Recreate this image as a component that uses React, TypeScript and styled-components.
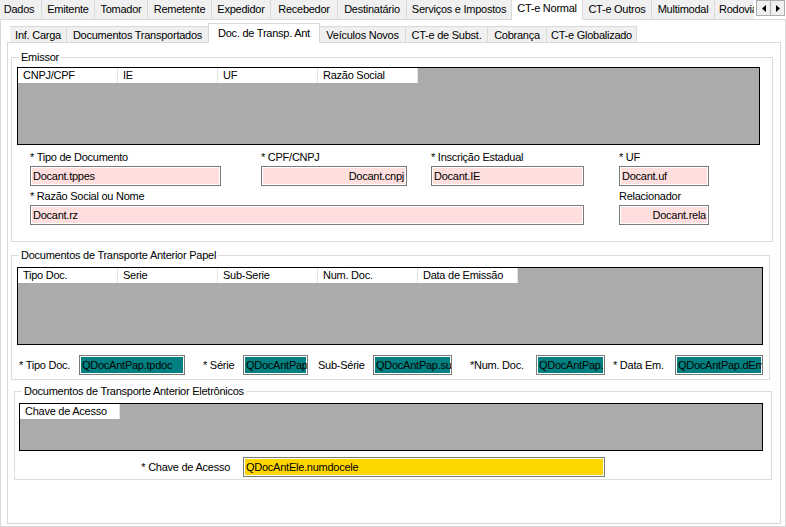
import React from 'react'
import styled, { createGlobalStyle } from 'styled-components'

const GlobalStyle = createGlobalStyle`
  html, body {
    margin: 0;
    padding: 0;
    background: #fff;
  }
  body {
    font-family: "Liberation Sans", Arial, sans-serif;
    font-size: 11px;
    letter-spacing: -0.25px;
    color: #000;
  }
  *, *::before, *::after {
    box-sizing: border-box;
  }
`

const Screen = styled.div`
  width: 786px;
  height: 527px;
  overflow: hidden;
  display: flex;
  flex-direction: column;
  background: #fff;
`

const Strip = styled.div<{ $h: number; $ml?: number }>`
  display: flex;
  height: ${p => p.$h}px;
  margin-left: ${p => p.$ml ?? 0}px;
  position: relative;
  z-index: 1;
`

const TabRow = styled.div`
  display: flex;
  align-items: flex-end;
  flex: 1;
  min-width: 0;
  overflow: hidden;
`

const Tab = styled.div<{ $w: number; $h: number; $pt: number; $active?: boolean }>`
  flex: none;
  width: ${p => p.$w}px;
  height: ${p => p.$h}px;
  padding-top: ${p => p.$pt}px;
  margin-left: -1px;
  line-height: 13px;
  text-align: center;
  white-space: nowrap;
  overflow: hidden;
  background: ${p => (p.$active ? '#fff' : '#f0f0f0')};
  border: 1px solid #d9d9d9;
  border-bottom: ${p => (p.$active ? 'none' : '1px solid #d9d9d9')};
`

const Scroller = styled.div`
  display: flex;
  flex: none;
  align-self: flex-start;
  margin-right: 1px;
  padding-left: 2px;
  background: #fff;
`

const ArrowButton = styled.div`
  width: 15px;
  height: 16px;
  border: 1px solid #adadad;
  background: #f0f0f0;
  display: flex;
  align-items: center;
  justify-content: center;
  & + & {
    margin-left: -1px;
  }
`

const OuterPage = styled.div`
  flex: 1;
  margin-top: -1px;
  border: 1px solid #d9d9d9;
  padding: 2px 0 0 6px;
  display: flex;
  flex-direction: column;
`

const InnerPage = styled.div`
  width: 774px;
  height: 482px;
  margin-top: -1px;
  border: 1px solid #d9d9d9;
  display: flex;
  flex-direction: column;
`

const GroupBox = styled.div<{ $w: number; $mt: number; $ml: number; $pad: string }>`
  position: relative;
  width: ${p => p.$w}px;
  margin: ${p => p.$mt}px 0 0 ${p => p.$ml}px;
  padding: ${p => p.$pad};
  border: 1px solid #dcdcdc;
`

const Caption = styled.span`
  position: absolute;
  top: -7px;
  left: 7px;
  padding: 0 2px;
  background: #fff;
  line-height: 13px;
  white-space: nowrap;
`

const DataGrid = styled.div<{ $w: number; $h: number }>`
  width: ${p => p.$w}px;
  height: ${p => p.$h}px;
  border: 1px solid #000;
  background: #ababab;
`

const GridHeader = styled.div`
  display: flex;
  height: 15px;
`

const HeaderCell = styled.div`
  width: 100px;
  background: #fff;
  border-right: 1px solid #e3e3e3;
  padding-left: 5px;
  line-height: 15px;
  white-space: nowrap;
  overflow: hidden;
`

const FieldGrid = styled.div`
  display: grid;
  grid-template-columns: 231px 170px 188px 90px;
  row-gap: 4px;
  margin: 6px 0 0 13px;
`

const FieldCell = styled.div<{ $span?: number }>`
  display: flex;
  flex-direction: column;
  gap: 2px;
  grid-column: ${p => (p.$span ? `span ${p.$span}` : 'auto')};
`

const FieldLabel = styled.div`
  line-height: 13px;
  white-space: nowrap;
`

const Field = styled.div<{ $w: number; $bg: string; $align?: 'left' | 'right' }>`
  width: ${p => p.$w}px;
  height: 20px;
  border: 1px solid #7a7a7a;
  box-shadow: inset 0 0 0 1px #fff;
  background: ${p => p.$bg};
  padding: 0 2px;
  line-height: 18px;
  text-align: ${p => p.$align ?? 'left'};
  white-space: nowrap;
  overflow: hidden;
`

const InlineRow = styled.div<{ $mt: number; $ml: number }>`
  display: flex;
  align-items: center;
  margin: ${p => p.$mt}px 0 0 ${p => p.$ml}px;
`

const InlineLabel = styled.div<{ $w: number; $pl?: number; $pr?: number; $align?: 'left' | 'right' }>`
  flex: none;
  width: ${p => p.$w}px;
  padding-left: ${p => p.$pl ?? 0}px;
  padding-right: ${p => p.$pr ?? 0}px;
  text-align: ${p => p.$align ?? 'left'};
  white-space: nowrap;
`

const PINK = '#ffdede'
const TEAL = '#008080'
const GOLD = '#ffd700'

const outerTabs: [string, number][] = [
  ['Dados', 46],
  ['Emitente', 54],
  ['Tomador', 54],
  ['Remetente', 65],
  ['Expedidor', 60],
  ['Recebedor', 68],
  ['Destinatário', 70],
  ['Serviços e Impostos', 106],
  ['CT-e Normal', 72],
  ['CT-e Outros', 70],
  ['Multimodal', 64],
  ['Rodoviário', 60],
]

const innerTabs: [string, number][] = [
  ['Inf. Carga', 58],
  ['Documentos Transportados', 143],
  ['Doc. de Transp. Ant', 112],
  ['Veículos Novos', 87],
  ['CT-e de Subst.', 83],
  ['Cobrança', 60],
  ['CT-e Globalizado', 91],
]

function Arrow({ dir }: { dir: 'left' | 'right' }) {
  return (
    <svg width="4" height="7" viewBox="0 0 4 7">
      <polygon points={dir === 'left' ? '4,0 4,7 0,3.5' : '0,0 0,7 4,3.5'} fill="#000" />
    </svg>
  )
}

function Header({ cols }: { cols: string[] }) {
  return (
    <GridHeader>
      {cols.map(c => (
        <HeaderCell key={c}>{c}</HeaderCell>
      ))}
    </GridHeader>
  )
}

export default function App() {
  return (
    <Screen>
      <GlobalStyle />
      <Strip $h={20} $ml={-3}>
        <TabRow>
          {outerTabs.map(([name, w]) => {
            const active = name === 'CT-e Normal'
            return (
              <Tab key={name} $w={w} $h={active ? 21 : 21} $pt={active ? 2 : 3} $active={active}>
                {name}
              </Tab>
            )
          })}
        </TabRow>
        <Scroller>
          <ArrowButton><Arrow dir="left" /></ArrowButton>
          <ArrowButton><Arrow dir="right" /></ArrowButton>
        </Scroller>
      </Strip>
      <OuterPage>
        <Strip $h={21} $ml={3}>
          <TabRow>
            {innerTabs.map(([name, w]) => {
              const active = name === 'Doc. de Transp. Ant'
              return (
                <Tab key={name} $w={w} $h={active ? 20 : 17} $pt={active ? 3 : 2} $active={active}>
                  {name}
                </Tab>
              )
            })}
          </TabRow>
        </Strip>
        <InnerPage>
          <GroupBox $w={762} $mt={14} $ml={3} $pad="9px 0 16px 5px">
            <Caption>Emissor</Caption>
            <DataGrid $w={743} $h={78}>
              <Header cols={['CNPJ/CPF', 'IE', 'UF', 'Razão Social']} />
            </DataGrid>
            <FieldGrid>
              <FieldCell>
                <FieldLabel>* Tipo de Documento</FieldLabel>
                <Field $w={191} $bg={PINK}>Docant.tppes</Field>
              </FieldCell>
              <FieldCell>
                <FieldLabel>* CPF/CNPJ</FieldLabel>
                <Field $w={146} $bg={PINK} $align="right">Docant.cnpj</Field>
              </FieldCell>
              <FieldCell>
                <FieldLabel>* Inscrição Estadual</FieldLabel>
                <Field $w={153} $bg={PINK}>Docant.IE</Field>
              </FieldCell>
              <FieldCell>
                <FieldLabel>* UF</FieldLabel>
                <Field $w={90} $bg={PINK}>Docant.uf</Field>
              </FieldCell>
              <FieldCell $span={3}>
                <FieldLabel>* Razão Social ou Nome</FieldLabel>
                <Field $w={554} $bg={PINK}>Docant.rz</Field>
              </FieldCell>
              <FieldCell>
                <FieldLabel>Relacionador</FieldLabel>
                <Field $w={90} $bg={PINK} $align="right">Docant.rela</Field>
              </FieldCell>
            </FieldGrid>
          </GroupBox>

          <GroupBox $w={759} $mt={13} $ml={3} $pad="11px 0 4px 5px">
            <Caption>Documentos de Transporte Anterior Papel</Caption>
            <DataGrid $w={746} $h={78}>
              <Header cols={['Tipo Doc.', 'Serie', 'Sub-Serie', 'Num. Doc.', 'Data de Emissão']} />
            </DataGrid>
            <InlineRow $mt={10} $ml={2}>
              <InlineLabel $w={60}>* Tipo Doc.</InlineLabel>
              <Field $w={106} $bg={TEAL}>QDocAntPap.tpdoc</Field>
              <InlineLabel $w={58} $pl={18}>* Série</InlineLabel>
              <Field $w={65} $bg={TEAL}>QDocAntPap.serie</Field>
              <InlineLabel $w={65} $pl={10}>Sub-Série</InlineLabel>
              <Field $w={79} $bg={TEAL}>QDocAntPap.subserie</Field>
              <InlineLabel $w={84} $pl={18}>*Num. Doc.</InlineLabel>
              <Field $w={69} $bg={TEAL}>QDocAntPap.numdoc</Field>
              <InlineLabel $w={70} $pl={8}>* Data Em.</InlineLabel>
              <Field $w={88} $bg={TEAL}>QDocAntPap.dEmi</Field>
            </InlineRow>
          </GroupBox>

          <GroupBox $w={758} $mt={11} $ml={6} $pad="11px 0 2px 4px">
            <Caption>Documentos de Transporte Anterior Eletrônicos</Caption>
            <DataGrid $w={744} $h={48}>
              <Header cols={['Chave de Acesso']} />
            </DataGrid>
            <InlineRow $mt={6} $ml={0}>
              <InlineLabel $w={224} $pr={13} $align="right">* Chave de Acesso</InlineLabel>
              <Field $w={362} $bg={GOLD}>QDocAntEle.numdocele</Field>
            </InlineRow>
          </GroupBox>
        </InnerPage>
      </OuterPage>
    </Screen>
  )
}
